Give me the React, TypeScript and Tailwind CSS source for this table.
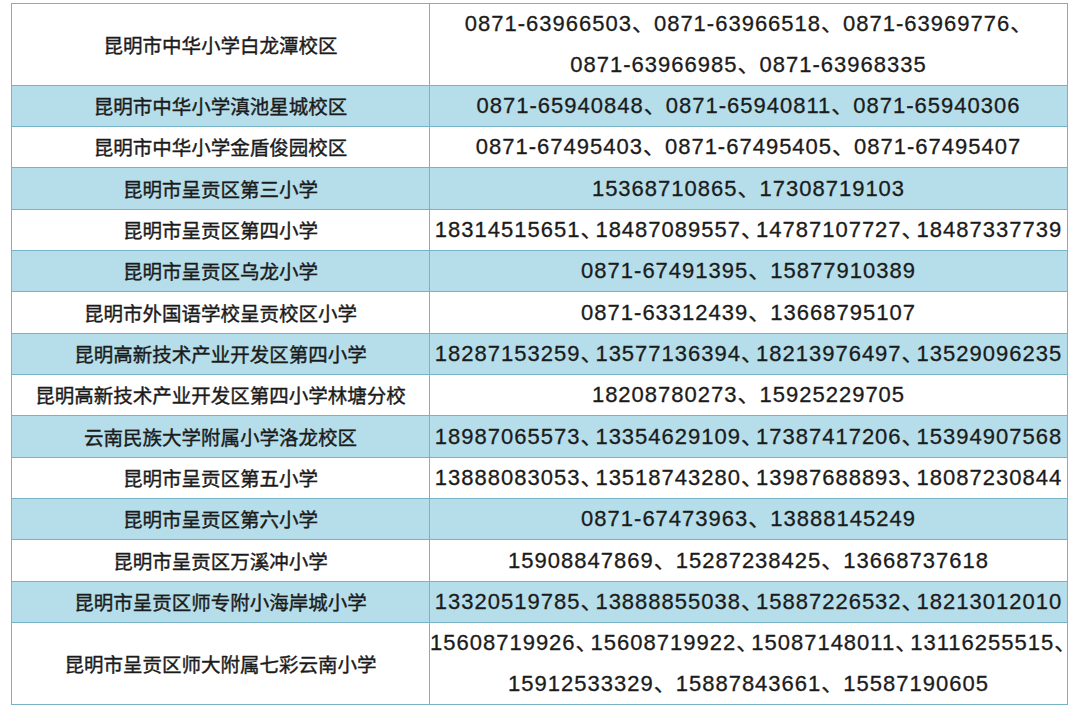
import React from "react";

type Row = {
  school: string;
  lines: string[][];
  compact?: boolean;
};

const rows: Row[] = [
  {
    school: "昆明市中华小学白龙潭校区",
    lines: [
      ["0871-63966503", "0871-63966518", "0871-63969776", ""],
      ["0871-63966985", "0871-63968335"],
    ],
  },
  { school: "昆明市中华小学滇池星城校区", lines: [["0871-65940848", "0871-65940811", "0871-65940306"]] },
  { school: "昆明市中华小学金盾俊园校区", lines: [["0871-67495403", "0871-67495405", "0871-67495407"]] },
  { school: "昆明市呈贡区第三小学", lines: [["15368710865", "17308719103"]] },
  {
    school: "昆明市呈贡区第四小学",
    lines: [["18314515651", "18487089557", "14787107727", "18487337739"]],
    compact: true,
  },
  { school: "昆明市呈贡区乌龙小学", lines: [["0871-67491395", "15877910389"]] },
  { school: "昆明市外国语学校呈贡校区小学", lines: [["0871-63312439", "13668795107"]] },
  {
    school: "昆明高新技术产业开发区第四小学",
    lines: [["18287153259", "13577136394", "18213976497", "13529096235"]],
    compact: true,
  },
  { school: "昆明高新技术产业开发区第四小学林塘分校", lines: [["18208780273", "15925229705"]] },
  {
    school: "云南民族大学附属小学洛龙校区",
    lines: [["18987065573", "13354629109", "17387417206", "15394907568"]],
    compact: true,
  },
  {
    school: "昆明市呈贡区第五小学",
    lines: [["13888083053", "13518743280", "13987688893", "18087230844"]],
    compact: true,
  },
  { school: "昆明市呈贡区第六小学", lines: [["0871-67473963", "13888145249"]] },
  { school: "昆明市呈贡区万溪冲小学", lines: [["15908847869", "15287238425", "13668737618"]] },
  {
    school: "昆明市呈贡区师专附小海岸城小学",
    lines: [["13320519785", "13888855038", "15887226532", "18213012010"]],
    compact: true,
  },
  {
    school: "昆明市呈贡区师大附属七彩云南小学",
    lines: [
      ["15608719926", "15608719922", "15087148011", "13116255515", ""],
      ["15912533329", "15887843661", "15587190605"],
    ],
  },
];

const PhoneLine = ({ items, compact }: { items: string[]; compact: boolean }) => (
  <div className="whitespace-nowrap">
    {items.map((num, i) => (
      <React.Fragment key={i}>
        {i > 0 && (
          <span className={compact ? "-mr-[7px] tracking-normal" : "tracking-normal"}>、</span>
        )}
        {num}
      </React.Fragment>
    ))}
  </div>
);

const rowHeight = (idx: number, double: boolean) => {
  if (double) return "h-[82px]";
  // every third row is a pixel taller, like the source image
  return idx % 3 === 0 ? "h-[42px]" : "h-[41px]";
};

export default function App() {
  return (
    <div className="w-[1080px] h-[708px] bg-white pl-[11px] pr-[12px] pt-[3px]">
      <table className="w-full table-fixed border-collapse text-[#1b1b1b]">
        <colgroup>
          <col className="w-[418px]" />
          <col />
        </colgroup>
        <tbody>
          {rows.map((row, idx) => {
            const blue = idx % 2 === 1;
            const double = row.lines.length > 1;
            return (
              <tr
                key={row.school}
                className={`${blue ? "bg-[#b5deea]" : "bg-white"} ${rowHeight(idx, double)}`}
              >
                <td
                  className="border-[1.5px] border-[#77b3c7] p-0 text-center align-middle text-[19.5px] leading-none whitespace-nowrap [-webkit-text-stroke:0.4px]"
                  style={{ fontFamily: '"Noto Sans CJK SC", sans-serif' }}
                >
                  {row.school}
                </td>
                <td
                  className={`border-[1.5px] border-[#77b3c7] p-0 text-center align-middle text-[22px] tracking-[1px] [-webkit-text-stroke:0.3px] ${
                    double ? "leading-[40.5px]" : "leading-none"
                  }`}
                  style={{ fontFamily: '"Liberation Sans", "Noto Sans CJK SC", sans-serif' }}
                >
                  {row.lines.map((line, li) => (
                    <PhoneLine
                      key={li}
                      items={line}
                      // first line of the last cell is packed tight like the 4-number rows
                      compact={!!row.compact || (idx === 14 && li === 0)}
                    />
                  ))}
                </td>
              </tr>
            );
          })}
        </tbody>
      </table>
    </div>
  );
}
